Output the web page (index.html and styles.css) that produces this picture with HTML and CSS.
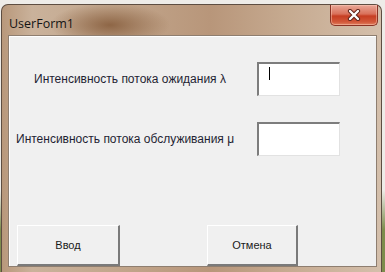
FILE: index.html
```html
<!DOCTYPE html>
<html lang="ru">
  <head>
    <meta charset="UTF-8" />
    <title>UserForm1</title>
    <link rel="stylesheet" href="styles.css">
  </head>
  <body>
    <div class="window">
      <div class="titlebar">
        <span class="title">UserForm1</span>
        <button class="close" type="button" aria-label="Закрыть">
          <svg width="16" height="12" viewBox="0 0 16 12">
            <path d="M4 2 L12 10 M12 2 L4 10" stroke="#5a2018" stroke-width="4.2" stroke-linecap="round" />
            <path d="M4 2 L12 10 M12 2 L4 10" stroke="#ffffff" stroke-width="2.4" stroke-linecap="round" />
          </svg>
        </button>
      </div>

      <div class="client">
        <div class="field-row row-first">
          <label class="field-label label-wait" for="lambda">Интенсивность потока ожидания λ</label>
          <div class="textbox" id="lambda"><span class="caret"></span></div>
        </div>
        <div class="field-row row-second">
          <label class="field-label label-serve" for="mu">Интенсивность потока обслуживания μ</label>
          <div class="textbox" id="mu"></div>
        </div>

        <div class="buttons">
          <button class="btn btn-ok" type="button">Ввод</button>
          <button class="btn btn-cancel" type="button">Отмена</button>
        </div>
      </div>
    </div>
  </body>
</html>
```

FILE: styles.css
```css
/* General Styling */
body {
  margin: 0;
  width: 385px;
  height: 272px;
  overflow: hidden;
  background: linear-gradient(180deg, #eeece8 0px, #eeece8 190px, #7d8c4c 230px);
  font-family: "Liberation Sans", Arial, sans-serif;
}

.window {
  margin: 4px 0 0 1px;
  width: 381px;
  height: 268px;
  padding-bottom: 5px;
  border-radius: 7px 7px 0 0;
  border: 1px solid #5e4e42;
  border-bottom: none;
  box-sizing: border-box;
  background-color: #b89a7e;
  background-image:
    radial-gradient(60px 22px at 108px 20px, #8e6646 0%, rgba(142, 102, 70, 0) 100%),
    linear-gradient(90deg, #b8987b 0%, #cab29b 8%, #c2a68c 30%, #b8967a 55%, #c6aa90 75%, #d4bfab 100%);
  display: flex;
  flex-direction: column;
}

.titlebar {
  height: 30px;
  display: flex;
  align-items: flex-start;
}

.title {
  margin: 10px 0 0 7px;
  font-family: "Open Sans", "Liberation Sans", sans-serif;
  font-size: 12.5px;
  color: #141414;
}

.close {
  margin: 0 3px 0 auto;
  width: 48px;
  height: 21px;
  padding: 0;
  border: 1px solid #8a3224;
  border-top: none;
  border-radius: 0 0 5px 5px;
  background: linear-gradient(180deg, #e9a898 0%, #d9705a 45%, #c63d22 55%, #d2583a 85%, #e08262 100%);
  box-shadow: inset 0 0 0 1px rgba(255, 210, 190, 0.45);
  display: flex;
  align-items: center;
  justify-content: center;
}

.client {
  flex: 1;
  margin: 0 4px 0 6px;
  background: #f0f0f0;
  border: 1px solid #8e7e70;
  box-shadow: inset 1px 1px 0 #ffffff;
  display: flex;
  flex-direction: column;
}

.field-row {
  display: flex;
  align-items: center;
  height: 34px;
  padding-right: 36px;
}

.row-first {
  margin-top: 26px;
}

.row-second {
  margin-top: 26px;
}

.field-label {
  flex: 1;
  font-size: 12px;
  color: #1f1f33;
}

.label-wait {
  padding-left: 25px;
}

.label-serve {
  padding-left: 7px;
}

.textbox {
  width: 83px;
  height: 34px;
  box-sizing: border-box;
  background: #ffffff;
  border-top: 2px solid #7d7d7d;
  border-left: 2px solid #7d7d7d;
  border-right: 1px solid #e2e2e2;
  border-bottom: 1px solid #e2e2e2;
  position: relative;
}

.caret {
  position: absolute;
  left: 10px;
  top: 3px;
  width: 1px;
  height: 13px;
  background: #000000;
}

.buttons {
  margin-top: auto;
  display: flex;
  padding-left: 8px;
}

.btn {
  height: 41px;
  font-family: "Liberation Sans", Arial, sans-serif;
  font-size: 11px;
  color: #1a1a1a;
  background: #f0f0f0;
  border-top: 1px solid #ffffff;
  border-left: 1px solid #ffffff;
  border-right: 2px solid #7a7a7a;
  border-bottom: 2px solid #7a7a7a;
  padding: 0;
}

.btn-ok {
  width: 103px;
}

.btn-cancel {
  width: 91px;
  margin-left: 87px;
}
```
